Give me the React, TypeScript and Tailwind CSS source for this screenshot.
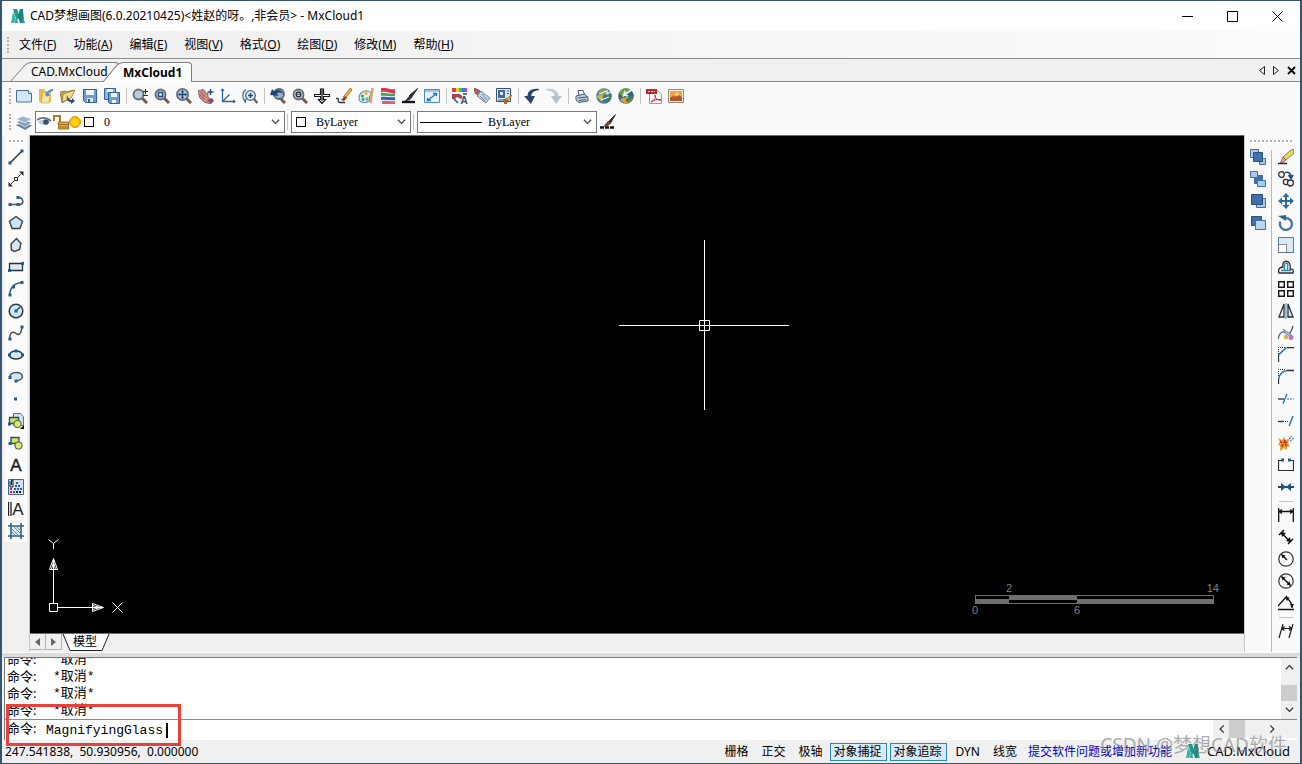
import type { ReactNode } from 'react';
import clsx from 'clsx';

type Tool = { label: string; icon: ReactNode };

const NAVY = '#1d4e7e';
const INK = '#2b2f36';

function Icon({ children }: { children: ReactNode }) {
  return (
    <svg viewBox="0 0 16 16" className="w-4 h-4 shrink-0" fill="none" aria-hidden="true">
      {children}
    </svg>
  );
}

function Lens({ children, r = 5 }: { children?: ReactNode; r?: number }) {
  return (
    <>
      <path d="M10 10l5 5" stroke="#7d5a48" strokeWidth="3" />
      <circle cx="6.5" cy="6.5" r={r} fill="#bccbd9" stroke="#646e79" strokeWidth="1.8" />
      {children}
    </>
  );
}

const fileTools: Tool[] = [
  {
    label: '新建',
    icon: (
      <>
        <path d="M.5 2.500h12l3 3v8.500H.5z" fill="#d3e7f8" stroke="#44719c" />
        <path d="M12.500 2.500v3h3" fill="#fff" stroke="#44719c" />
      </>
    ),
  },
  {
    label: '打开',
    icon: (
      <>
        <path d="M1 1h5l1 2h6v11H1z" fill="#e3bb50" />
        <path d="M5 4h8l-2 11H3z" fill="#f8e3a0" stroke="#cfa544" strokeWidth=".7" />
        <path d="M15 2c-3 0-5 2-6 5M8 4.500l.6 3 3-.7" stroke="#4f8fc4" strokeWidth="1.8" />
      </>
    ),
  },
  {
    label: '打开云图',
    icon: (
      <>
        <path d="M0 4l5-1 2 1 6-2-3 8-8 5z" fill="#cdab4b" stroke="#8b7433" strokeWidth=".8" />
        <path d="M3 6l12-4-4 8-9 4z" fill="#f0dc8c" stroke="#8b7433" strokeWidth=".8" />
        <path d="M7 7c1 4 3 5 5 5v-2l3 3-4 3v-2c-3 0-5-2-4-7z" fill="#2b4f74" />
      </>
    ),
  },
  {
    label: '保存',
    icon: (
      <>
        <path d="M1.500 1.500h13v13h-11l-2-2z" fill="#6f9fd0" stroke="#2f5f94" />
        <path d="M4 2h8v5H4z" fill="#eaf2fa" />
        <path d="M5 10h6v4H5z" fill="#dce6f0" />
        <path d="M6 11h2v3H6z" fill="#2f5f94" />
      </>
    ),
  },
  {
    label: '另存为',
    icon: (
      <>
        <path d="M.5.500h11v11H.5z" fill="#8fb5dd" stroke="#2f5f94" />
        <path d="M3 1h6v3H3z" fill="#eaf2fa" />
        <path d="M4.500 4.500h11v11h-10l-1-1z" fill="#6f9fd0" stroke="#2f5f94" />
        <path d="M7 5h6v4H7zM8 12h4v3H8z" fill="#eaf2fa" />
      </>
    ),
  },
];

const viewTools: Tool[] = [
  {
    label: '实时缩放',
    icon: (
      <>
        <Lens />
        <path d="M11 3.500h5M13.500 1v5M11 7.500h5" stroke={INK} strokeWidth="1.200" />
      </>
    ),
  },
  {
    label: '窗口缩放',
    icon: (
      <Lens>
        <path d="M4.500 4.500h4v4h-4z" fill="#fff" stroke={NAVY} strokeWidth="1.500" />
      </Lens>
    ),
  },
  {
    label: '范围缩放',
    icon: (
      <Lens r={5.6}>
        <path d="M6.500 2.500v8M2.500 6.500h8" stroke={NAVY} strokeWidth="1.600" />
        <path d="M5 4l1.500-2L8 4M5 9l1.500 2L8 9M4 5L2 6.500 4 8M9 5l2 1.500L9 8" fill={NAVY} />
      </Lens>
    ),
  },
  {
    label: '平移',
    icon: (
      <>
        <path d="M0 2l3 1 1-2 3 2 1 3 2-1v4l5 4-3 3-6-2-5-5 1-1-3-3z" fill="#c98b88" stroke="#8d4f4c" strokeWidth=".8" />
        <path d="M3 4l4 5M2 7l4 4" stroke="#8d4f4c" strokeWidth=".8" />
        <path d="M12.500 1v6M9.500 4h6" stroke={NAVY} strokeWidth="1.400" />
        <path d="M9 12l5-2 2 3-3 3z" fill="#7b5660" />
      </>
    ),
  },
  {
    label: '坐标系',
    icon: (
      <>
        <path d="M2.500 1v12.500H15M2.500 13.500l7-7" stroke="#2f6b9e" strokeWidth="1.300" />
        <path d="M.5 3l2-3 2 3M13 11.500l3 2-3 2" fill="#2f6b9e" />
      </>
    ),
  },
  {
    label: '上一视图',
    icon: (
      <>
        <path d="M12 11l3.500 4" stroke="#7d5a48" strokeWidth="2.200" />
        <circle cx="8.500" cy="7.500" r="4.800" fill="#e1edf6" stroke="#4c6378" strokeWidth="1.300" />
        <path d="M8.500 5v5M6 7.500h5" stroke={NAVY} strokeWidth="1.400" />
        <path d="M4 1.500C0 4 0 10 3 13.500M1.500 11l1.800 3 .7-3" stroke="#39698f" strokeWidth="1.200" />
      </>
    ),
  },
];

const drawTools: Tool[] = [
  {
    label: '视图返回',
    icon: (
      <>
        <path d="M10 10l5 5" stroke="#7d5a48" strokeWidth="3" />
        <circle cx="9" cy="6" r="5" fill="#9bb4cc" stroke="#55697c" strokeWidth="1.800" />
        <path d="M0 7l2-6 2 2c4-2 8-1 9 3-3-2-5-2-6 0l2 2z" fill="#1f4775" />
      </>
    ),
  },
  {
    label: '查找',
    icon: (
      <Lens>
        <circle cx="6.500" cy="6.500" r="2.200" fill="#fff" stroke={INK} strokeWidth="1.400" />
        <path d="M5.500 6.500h2" stroke={INK} />
      </Lens>
    ),
  },
  {
    label: '十字光标',
    icon: (
      <path
        d="M6.500.500v6h-6v2h6v3h-2L8 15.500l3.500-4h-2v-3h6v-2h-6v-6M8 0v13"
        fill="#fff"
        stroke="#17191d"
        strokeWidth="1.200"
      />
    ),
  },
  {
    label: '画笔',
    icon: (
      <>
        <path d="M15.500.500L8 10" stroke="#a8702a" strokeWidth="3.200" />
        <path d="M15 1L8 10" stroke="#f3c95c" strokeWidth="1.400" />
        <path d="M9 8l-4 4 3 1 3-3z" fill="#8f3e22" />
        <path d="M0 10.500c5-1 0 4 4 4h5" stroke={INK} strokeWidth="1.300" />
      </>
    ),
  },
  {
    label: '颜色',
    icon: (
      <>
        <path d="M1 10C1 5 6 2 10 3s4 4 2 5 1 3-1 5-10 3-10-3z" fill="#e9f1e2" stroke="#5f97bd" strokeWidth="1.200" />
        <circle cx="4.500" cy="8" r="1.500" fill="#3f9b58" />
        <circle cx="8" cy="5.500" r="1.400" fill="#e99a2c" />
        <circle cx="5" cy="11.500" r="1.400" fill="#3b83c8" />
        <circle cx="9" cy="11" r="1.700" fill="#65b3a7" />
        <path d="M14.500 0l-2 15" stroke="#e39a5e" strokeWidth="2.200" />
      </>
    ),
  },
  {
    label: '图层颜色',
    icon: (
      <>
        <path d="M1 0h5c4 1 6 2 9 1v4C11 6 7 3 1 4z" fill="#d73550" />
        <path d="M1 5c5-1 9 2 14 0v3C10 9 6 7 1 8z" fill="#3fa55a" />
        <path d="M1 9c5-1 9 1 14 0v3C10 13 6 11 1 12z" fill="#365fc2" />
        <path d="M2 13c5-1 8 1 13 0v3H2z" fill="#cf6478" />
      </>
    ),
  },
  {
    label: '线型',
    icon: (
      <>
        <path d="M15.500.500L7 8l2 2z" fill="#22262c" stroke="#22262c" />
        <path d="M8 7l-6 7 6-2 2-3z" fill="#33373e" />
        <path d="M0 14h13" stroke="#17191d" strokeWidth="2.400" />
      </>
    ),
  },
  {
    label: '全屏',
    icon: (
      <>
        <path d="M.5 1.500h15v13H.5z" fill="#e3f0fa" stroke="#4a8cbf" />
        <path d="M1 2h14v2H1z" fill="#9bc6e6" />
        <path d="M4 12l8-6M9 5.500h3.500V8M3.500 10v2.500H7" stroke="#2d78b4" strokeWidth="1.300" />
      </>
    ),
  },
];

const propertyTools: Tool[] = [
  {
    label: '文字样式',
    icon: (
      <>
        <path d="M0 0h4v4H0z" fill="#e53b3b" />
        <path d="M4 0h3v4H4z" fill="#e8d92f" />
        <path d="M7 0h3v4H7z" fill="#3cc84a" />
        <path d="M10 0h3v4h-3z" fill="#347be5" />
        <path d="M13 0h2v4h-2z" fill="#d433d0" />
        <path d="M0 6h8l3 3-2 2-4-2-2 2H0z" fill="#a04a50" />
        <path d="M2 11l4 4M11 6h4" stroke="#30506f" strokeWidth="1.500" />
        <text x="12" y="16" textAnchor="middle" fontSize="10" fontWeight="bold" fontFamily="Liberation Sans, sans-serif" fill="#30506f">A</text>
      </>
    ),
  },
  {
    label: '特性匹配',
    icon: (
      <>
        <path d="M0 0l5 2 4 4-3 3-5-4z" fill="#a8605c" stroke="#70403f" strokeWidth=".7" />
        <path d="M7 3l9 7-4 5-9-7z" fill="#c3d3e2" stroke="#55748f" strokeWidth=".8" />
        <path d="M8 6l5 6M6 8l5 5" stroke="#55748f" strokeWidth=".8" />
      </>
    ),
  },
  {
    label: '特性',
    icon: (
      <>
        <path d="M.5.500h14v13H.5z" fill="#dfeaf4" stroke="#37506e" />
        <path d="M2 2h7v8H2z" fill="#3a69a3" />
        <path d="M4 4h3v3H4z" fill="#dfeaf4" />
        <path d="M11 3h2M11 5.500h2M2 12h5" stroke="#37506e" />
        <path d="M16 7l-4 6-3-2z" fill="#eebd46" stroke="#95661c" strokeWidth=".7" />
        <path d="M7 11h5l-1 5H8z" fill="#a06c25" />
      </>
    ),
  },
];

const historyTools: Tool[] = [
  {
    label: '撤销',
    icon: (
      <>
        <path d="M15 1C8 0 3 3 3.500 9h4C7 5 9 3 15 2z" fill="#26466e" />
        <path d="M0 8h11l-4 8z" fill="#26466e" />
      </>
    ),
  },
  {
    label: '重做',
    icon: (
      <>
        <path d="M0 1c8-1 13 2 12.500 8h-4C9 5 6 3 0 2z" fill="#c3c9ce" />
        <path d="M16 8H5l5 8z" fill="#b9c0c6" />
      </>
    ),
  },
];

const outputTools: Tool[] = [
  {
    label: '打印',
    icon: (
      <>
        <path d="M4 2.500h5l2 5H5z" fill="#fff" stroke="#455a72" />
        <path d="M2 8l8-2 4 3v4l-9 1.500L2 12z" fill="#bfcbd9" stroke="#455a72" />
        <path d="M4 10l9-1M5 12.500l7-1" stroke="#455a72" />
      </>
    ),
  },
  {
    label: '云同步',
    icon: (
      <>
        <circle cx="8" cy="8" r="7.800" fill="#4479ac" />
        <path d="M1 5c3-6 10-5 13-1L8 7z" fill="#7fa544" />
        <path d="M9 15c5-1 7-6 6-9l-6 5z" fill="#3f7f52" />
        <path d="M0 8l7-2-1 8z" fill="#d9b73f" />
        <path d="M3 6l8-3v3l4-2M13 9l-8 3" stroke="#e9f0f4" strokeWidth="1.300" />
      </>
    ),
  },
  {
    label: '云浏览',
    icon: (
      <>
        <circle cx="8" cy="8" r="7.800" fill="#2f638e" />
        <path d="M1 5c3-6 10-5 12-2L5 10z" fill="#6aa345" />
        <path d="M2 11c3 6 10 6 13-1l-6-1z" fill="#d9a53a" />
        <path d="M7 12l7-5 1 3-5 5z" fill="#3f7f52" />
        <path d="M15 1L6 7l1-4M6 7l4 1" stroke="#f4f6f2" strokeWidth="1.800" />
      </>
    ),
  },
];

const exportTools: Tool[] = [
  {
    label: '输出PDF',
    icon: (
      <>
        <path d="M3.500 2.500h8l4 4v9h-12z" fill="#fff" stroke="#9c9c9c" />
        <path d="M0 1h11v5H0z" fill="#c9202b" />
        <path d="M2 3.500h7" stroke="#fff" strokeDasharray="2 1" />
        <path d="M5 14c4-2 5-5 4-7 0 4 3 5 6 5-4-1-7 0-10 2z" stroke="#c9202b" />
      </>
    ),
  },
  {
    label: '输出图片',
    icon: (
      <>
        <path d="M.5 1.500h15v13H.5z" fill="#f7f2ea" stroke="#8f8677" />
        <path d="M2 3h12v10H2z" fill="#eea24e" />
        <path d="M2 10c3-4 5 0 7-2s3 0 5 1v4H2z" fill="#b2542d" />
        <circle cx="9" cy="6" r="1.800" fill="#fbdc76" />
      </>
    ),
  },
];

const topGroups = [fileTools, viewTools, drawTools, propertyTools, historyTools, outputTools, exportTools];

function Node({ x, y }: { x: number; y: number }) {
  return <rect x={x - 1.5} y={y - 1.5} width="3" height="3" fill="#1c5f92" />;
}

const leftTools: Tool[] = [
  {
    label: '直线',
    icon: (
      <>
        <path d="M2 14L14 2" stroke={INK} strokeWidth="1.500" />
        <Node x={2} y={14} />
        <Node x={14} y={2} />
      </>
    ),
  },
  {
    label: '构造线',
    icon: (
      <>
        <path d="M1 15L15 1" stroke={INK} />
        <path d="M11 .5h4.500V5zM.5 11v4.500H5z" fill={INK} />
        <rect x="6.500" y="6.500" width="3" height="3" fill="#fff" stroke={INK} />
      </>
    ),
  },
  {
    label: '多段线',
    icon: (
      <>
        <path d="M1 11.500h10c5 0 5-6 0-7" stroke="#44535f" strokeWidth="1.600" />
        <Node x={2} y={11.5} />
        <Node x={10} y={11.5} />
        <Node x={10} y={4.5} />
      </>
    ),
  },
  {
    label: '正多边形',
    icon: <path d="M8 1.500l6.500 4.800-2.500 7.200H4L1.500 6.300z" fill="#cfe2f0" stroke="#2f4250" strokeWidth="1.400" />,
  },
  {
    label: '多边形',
    icon: <path d="M8.500 1.500L13 6.500l-1.500 6L6.500 14.500 3.500 13 3 7z" fill="#d8e6f0" stroke="#3f464d" strokeWidth="1.500" />,
  },
  {
    label: '矩形',
    icon: (
      <>
        <path d="M1.500 4.500h13v7h-13z" fill="#dceaf5" stroke={INK} strokeWidth="1.300" />
        <Node x={14.5} y={4.5} />
        <Node x={1.5} y={11.5} />
      </>
    ),
  },
  {
    label: '圆弧',
    icon: (
      <>
        <path d="M1.500 14.500C2 7 6 2 14 1.500" stroke="#4a555e" strokeWidth="1.600" />
        <Node x={2} y={14} />
        <Node x={5.5} y={6} />
        <Node x={14} y={1.5} />
      </>
    ),
  },
  {
    label: '圆',
    icon: (
      <>
        <circle cx="8" cy="8" r="6.800" fill="#d5e8f5" stroke="#2d3942" strokeWidth="1.500" />
        <path d="M8 8l4-4" stroke={NAVY} strokeWidth="1.500" />
        <Node x={8} y={8} />
      </>
    ),
  },
  {
    label: '样条曲线',
    icon: (
      <>
        <path d="M1.500 14C2 7 5 6 8 8.500S13 9 14 2" stroke="#4a4f55" strokeWidth="1.500" />
        <Node x={2} y={14} />
        <Node x={14} y={2} />
      </>
    ),
  },
  {
    label: '椭圆',
    icon: (
      <>
        <ellipse cx="8" cy="8" rx="6.500" ry="4" fill="#d5e8f5" stroke="#2d3942" strokeWidth="1.500" />
        <Node x={1.5} y={8} />
        <Node x={14.5} y={8} />
        <Node x={8} y={4} />
      </>
    ),
  },
  {
    label: '椭圆弧',
    icon: (
      <>
        <path d="M2 8C2 2 14 2 14.500 7.500 14 11 11 11.500 8 12" fill="#d5e8f5" stroke="#46525c" strokeWidth="1.500" />
        <Node x={2} y={8.5} />
        <Node x={8} y={12} />
      </>
    ),
  },
  { label: '点', icon: <Node x={7.5} y={8} /> },
  {
    label: '插入块',
    icon: (
      <>
        <path d="M5.500.500h7l3 3v9h-10z" fill="#cfe0f3" stroke="#4f7499" />
        <path d="M1.500 4.500h9v6h-9z" fill="#d9e25a" stroke={NAVY} strokeWidth="1.300" />
        <circle cx="9.500" cy="11" r="3.600" fill="#d9e87a" stroke="#5b7a45" strokeWidth="1.200" />
        <Node x={1.5} y={11} />
        <path d="M16 12v4h-4z" fill="#000" />
      </>
    ),
  },
  {
    label: '创建块',
    icon: (
      <>
        <path d="M3 2.500h8v6H3z" fill="#d9e25a" stroke={NAVY} strokeWidth="1.300" />
        <circle cx="10.500" cy="10.500" r="3.500" fill="#d9e87a" stroke="#5b6a45" strokeWidth="1.200" />
        <Node x={2} y={8.5} />
      </>
    ),
  },
  {
    label: '单行文字',
    icon: <text x="8" y="14" textAnchor="middle" fontSize="17" fontFamily="Liberation Sans, sans-serif" fill="#1a1a1a" stroke="#1a1a1a" strokeWidth=".4">A</text>,
  },
  {
    label: '图案填充',
    icon: (
      <>
        <path d="M.5.500h15v15H.5z" fill="#d3e2f5" stroke="#3e669a" />
        <path d="M2 2v6h3V1H3.500v5" stroke="#222" />
        <path d="M8 4h2M7 7h2m1 0h2M6 10h2m1 0h2m1 0h2" stroke="#255f9c" strokeWidth="1.800" />
        <path d="M2 10h2M2 13h2m1 0h2" stroke="#c22" strokeWidth="1.800" />
        <path d="M8 13h2m1 0h2" stroke="#222" strokeWidth="1.800" />
      </>
    ),
  },
  {
    label: '多行文字',
    icon: (
      <>
        <path d="M.5 1v14M3 1v14" stroke="#222" strokeWidth="1.300" />
        <text x="10" y="14" textAnchor="middle" fontSize="17" fontFamily="Liberation Sans, sans-serif" fill="#1a1a1a">A</text>
      </>
    ),
  },
  {
    label: '面域',
    icon: (
      <>
        <path d="M3 3h10v10H3z" fill="#d8e8f3" />
        <path d="M3 0v16M13 0v16M0 3h16M0 13h16" stroke="#33617f" strokeWidth="1.600" />
        <path d="M4 6l6 6M6 4l7 7M4 9l3 3M9 4l4 4" stroke="#6a91ac" />
      </>
    ),
  },
];

const BACK = '#a8cbea';
const FRONT = '#416fa8';

const orderTools: Tool[] = [
  {
    label: '前置',
    icon: (
      <>
        <path d="M.5.500h8v8h-8zM9.500 9.500h6v6h-6z" fill={BACK} stroke={FRONT} />
        <path d="M3.500 3.500h9v9h-9z" fill={FRONT} stroke="#2b4f7e" />
      </>
    ),
  },
  {
    label: '后置',
    icon: (
      <>
        <path d="M4 4h9v9H4z" fill={FRONT} />
        <path d="M.5.500h7v6h-7zM7.500 9.500h8v6h-8z" fill={BACK} stroke={FRONT} />
      </>
    ),
  },
  {
    label: '置于对象之上',
    icon: (
      <>
        <path d="M6.500 5.500h9v9h-9z" fill={BACK} stroke={FRONT} />
        <path d="M1.500 1.500h11v10h-11z" fill={FRONT} stroke="#2b4f7e" />
      </>
    ),
  },
  {
    label: '置于对象之下',
    icon: (
      <>
        <path d="M1.500 1.500h10v9h-10z" fill={FRONT} stroke="#2b4f7e" />
        <path d="M5.500 5.500h10v9h-10z" fill="#b9d5ee" stroke={FRONT} />
      </>
    ),
  },
];

const modifyTools: Tool[] = [
  {
    label: '删除',
    icon: (
      <>
        <path d="M13 1l3-1v4l-8 7-3-3z" fill="#e6d95e" stroke="#6f6230" strokeWidth=".8" />
        <path d="M5 8l3 3-3 2.500H2.500z" fill="#e5a29c" stroke="#7f3d3c" strokeWidth=".7" />
        <path d="M0 14.500h9" stroke={INK} strokeWidth="1.500" />
      </>
    ),
  },
  {
    label: '复制',
    icon: (
      <>
        <circle cx="3.500" cy="3.500" r="2.800" stroke={INK} strokeWidth="1.300" />
        <circle cx="8" cy="11" r="2.600" stroke={INK} strokeWidth="1.300" />
        <circle cx="12.500" cy="12" r="3" fill="#fff" stroke={INK} strokeWidth="1.300" />
        <path d="M7 1.500c4-1 6 1 6 5M10.500 4l2.500 3.500L15 4" stroke={NAVY} strokeWidth="1.600" />
      </>
    ),
  },
  {
    label: '移动',
    icon: (
      <>
        <path d="M8 2v12M2 8h12" stroke="#2f679b" strokeWidth="2" />
        <path d="M4.500 4L8 0l3.500 4zM4.500 12L8 16l3.500-4zM4 4.500L0 8l4 3.500zM12 4.500L16 8l-4 3.500z" fill="#2f679b" />
      </>
    ),
  },
  {
    label: '旋转',
    icon: (
      <>
        <path d="M8 3a6 6 0 1 1-5.500 3.500" stroke="#48789f" strokeWidth="2.400" />
        <path d="M0 1l8-1v6z" fill="#326591" />
      </>
    ),
  },
  {
    label: '缩放',
    icon: (
      <>
        <path d="M.5.500h15v15H.5z" fill="#dbe9f6" stroke="#4d7dab" />
        <path d="M.5 7.500h8v8h-8z" fill="#fff" stroke={INK} strokeDasharray="1 1" />
      </>
    ),
  },
  {
    label: '偏移',
    icon: (
      <>
        <path d="M1 14h14c1-4-1-4-3-4 2-10-9-10-7-2-4 0-5 3-4 6z" stroke={INK} strokeWidth="1.300" />
        <path d="M3 11.500h10M6.500 11V8c-1-5 5-5 3 0v3" stroke="#3485b5" strokeWidth="1.400" />
      </>
    ),
  },
  {
    label: '阵列',
    icon: <path d="M.7.700h5.600v5.600H.7zM9.700.700h5.600v5.600H9.700zM.7 9.700h5.600v5.600H.7zM9.700 9.700h5.600v5.600H9.700z" stroke="#15181c" strokeWidth="1.400" />,
  },
  {
    label: '镜像',
    icon: (
      <>
        <path d="M6 1v13H1z" stroke={INK} strokeWidth="1.300" />
        <path d="M10 1v13h5z" fill="#dde7ef" stroke={INK} strokeWidth="1.300" />
        <path d="M8 0v16" stroke="#3485b5" />
      </>
    ),
  },
  {
    label: '编辑样条',
    icon: (
      <>
        <path d="M0 14C2 6 5 6 8 8s5 0 7-7" stroke="#44607c" strokeWidth="1.300" />
        <path d="M5 4l8 5 1 3-6-3z" fill="#a4bad3" stroke="#5f7892" strokeWidth=".6" />
        <circle cx="8" cy="12" r="2.200" fill="#ddb338" />
        <circle cx="13" cy="12.500" r="2.500" fill="#b279cf" />
      </>
    ),
  },
  {
    label: '倒角',
    icon: (
      <>
        <path d="M.5 15V8M9 .500h7" stroke={INK} strokeWidth="1.300" />
        <path d="M.5 8l8-7.500" stroke="#2a78b8" strokeWidth="1.600" />
        <path d="M.5 7V.500H8" stroke={INK} strokeDasharray="1 1" />
      </>
    ),
  },
  {
    label: '圆角',
    icon: (
      <>
        <path d="M.5 15v-5M9 1.500h7" stroke={INK} strokeWidth="1.300" />
        <path d="M.5 10c1-5 4-8 9-8.500" stroke="#2a78b8" strokeWidth="1.600" />
        <path d="M.5 7V.500H8" stroke={INK} strokeDasharray="1 1" />
      </>
    ),
  },
  {
    label: '修剪',
    icon: (
      <>
        <path d="M0 8h6" stroke={INK} strokeWidth="1.300" />
        <path d="M5 12.500L9 3" stroke="#2a78b8" strokeWidth="1.400" />
        <path d="M9 8h7" stroke="#2a78b8" strokeDasharray="2 1" />
      </>
    ),
  },
  {
    label: '延伸',
    icon: (
      <>
        <path d="M0 8.500h6" stroke={INK} strokeWidth="1.300" />
        <path d="M7 8.500h4" stroke={INK} strokeDasharray="1 1" />
        <path d="M11 13L15 3" stroke="#2a78b8" strokeWidth="1.500" />
      </>
    ),
  },
  {
    label: '分解',
    icon: (
      <>
        <path d="M9 6l5-5M12 6l4-3" stroke="#5b83b3" strokeWidth="1.500" strokeDasharray="2 1" />
        <path d="M0 3l4 2 2-3 2 3 3-1-1 4 2 3-3 1v3l-3-2-4 3v-5L0 9l2-2z" fill="#e9a22d" />
        <path d="M2 6l2 2M7 5l-1 3M4 12l1-3M9 11l-2-2M9 7l-2 1" stroke="#c23022" strokeWidth="1.600" />
      </>
    ),
  },
  {
    label: '打断',
    icon: (
      <>
        <path d="M4 3.500H.500v10h15v-10H12" stroke={INK} strokeWidth="1.200" />
        <Node x={4.5} y={3} />
        <Node x={11.5} y={3} />
      </>
    ),
  },
  {
    label: '合并',
    icon: (
      <>
        <path d="M0 8h16" stroke="#16304a" strokeWidth="1.800" />
        <path d="M3 4L8 8l-5 4zM13 4L8 8l5 4z" fill="#235483" />
      </>
    ),
  },
];

const dimensionTools: Tool[] = [
  {
    label: '线性标注',
    icon: <path d="M.7 1v14M15.300 1v14M1 4.500h14M4 2.500l-3 2 3 2M12 2.500l3 2-3 2" stroke="#111" strokeWidth="1.300" />,
  },
  {
    label: '对齐标注',
    icon: (
      <>
        <path d="M1 6l5-5M10 15l5-5M3.500 4l9 9" stroke="#111" strokeWidth="1.500" />
        <path d="M3 3l5 1-4 4zM13 13l-5-1 4-4z" fill="#111" />
      </>
    ),
  },
  {
    label: '半径标注',
    icon: (
      <>
        <circle cx="8" cy="8" r="7.200" stroke="#333" strokeWidth="1.200" />
        <path d="M9 9L4 4" stroke="#111" strokeWidth="1.500" />
        <path d="M3 3l4.500 1.500L4.500 7.500z" fill="#111" />
      </>
    ),
  },
  {
    label: '直径标注',
    icon: (
      <>
        <circle cx="8" cy="8" r="7.200" stroke="#333" strokeWidth="1.200" />
        <path d="M12 12L4 4" stroke="#111" strokeWidth="1.500" />
        <path d="M3 3l4.500 1.500L4.500 7.500zM13 13l-4.500-1.500 3-3z" fill="#111" />
      </>
    ),
  },
  {
    label: '角度标注',
    icon: (
      <>
        <path d="M0 14.500h16M0 11L9 1M8 3c4 2 6 5 6 10" stroke="#111" strokeWidth="1.300" />
        <path d="M7 2l4.500.5L9 6zM12 9h4l-2 4z" fill="#111" />
      </>
    ),
  },
];

const obliqueTool: Tool = {
  label: '倾斜标注',
  icon: <path d="M1 15L5 1M11 15l4-14M4 5.500h9M6.500 3.500L4 5.500l2.500 2M11 3.500l2.500 2-2.500 2" stroke="#222" strokeWidth="1.200" />,
};

const menus = [
  ['文件', 'F'],
  ['功能', 'A'],
  ['编辑', 'E'],
  ['视图', 'V'],
  ['格式', 'O'],
  ['绘图', 'D'],
  ['修改', 'M'],
  ['帮助', 'H'],
];

const modes = [
  { label: '栅格', on: false },
  { label: '正交', on: false },
  { label: '极轴', on: false },
  { label: '对象捕捉', on: true },
  { label: '对象追踪', on: true },
  { label: 'DYN', on: false },
  { label: '线宽', on: false },
];

function ToolButton({ tool }: { tool: Tool }) {
  return (
    <button
      type="button"
      aria-label={tool.label}
      title={tool.label}
      className="flex w-[22px] h-[22px] shrink-0 items-center justify-center hover:bg-sky-100"
    >
      <Icon>{tool.icon}</Icon>
    </button>
  );
}

function Grip({ vertical = false }: { vertical?: boolean }) {
  return (
    <div
      className={clsx(
        'border-[#b5b5b5] shrink-0',
        vertical ? 'h-4 w-0 border-l-2 border-dotted' : 'h-0 w-full border-t-2 border-dotted'
      )}
    />
  );
}

function Logo() {
  return (
    <svg viewBox="0 0 16 16" className="w-4 h-4 shrink-0" aria-hidden="true">
      <path d="M3 1h4l3 8-3 3-2-4z" fill="#1d9c8d" />
      <path d="M3 4l3 7-2 4H1z" fill="#35b7a4" />
      <path d="M10 1h3l1 14h-4L8 8z" fill="#15877c" />
      <path d="M13 8l2 7h-3zM5 13l2-3 1 5H5z" fill="#2aa99a" />
    </svg>
  );
}

function Chevron({ className }: { className?: string }) {
  return (
    <svg viewBox="0 0 10 6" className={clsx('w-[9px] h-[6px]', className)} fill="none" aria-hidden="true">
      <path d="M1 .5l4 4 4-4" stroke="currentColor" strokeWidth="1.4" />
    </svg>
  );
}

function Combo({ label, value, className, children }: { label: string; value: string; className: string; children: ReactNode }) {
  return (
    <div className={clsx('relative flex h-[22px] items-center border border-[#7a7a7a] bg-white', className)}>
      {children}
      <select
        aria-label={label}
        defaultValue={value}
        className="h-full min-w-0 flex-1 appearance-none bg-transparent text-xs text-black outline-none font-['Liberation_Serif','Noto_Sans_CJK_SC',serif]"
      >
        <option>{value}</option>
      </select>
      <Chevron className="absolute right-1 text-[#444] pointer-events-none" />
    </div>
  );
}

function Swatch() {
  return <span className="w-[10px] h-[10px] shrink-0 border border-black bg-white" />;
}

function TitleBar() {
  return (
    <header className="flex h-[30px] items-center bg-white pl-2">
      <Logo />
      <h1 className="flex-1 pl-1 text-xs">CAD梦想画图(6.0.20210425)&lt;姓赵的呀。,非会员&gt; - MxCloud1</h1>
      <div className="flex">
        <button type="button" aria-label="最小化" className="flex h-7 w-[45px] items-center justify-center">
          <svg viewBox="0 0 11 11" className="w-[11px] h-[11px]"><path d="M0 5.500h11" stroke="#000" /></svg>
        </button>
        <button type="button" aria-label="最大化" className="flex h-7 w-[45px] items-center justify-center">
          <svg viewBox="0 0 11 11" className="w-[11px] h-[11px]" fill="none"><path d="M.5.500h10v10H.5z" stroke="#000" /></svg>
        </button>
        <button type="button" aria-label="关闭" className="flex h-7 w-[45px] items-center justify-center">
          <svg viewBox="0 0 11 11" className="w-[11px] h-[11px]"><path d="M.5.500l10 10M10.500.5l-10 10" stroke="#000" /></svg>
        </button>
      </div>
    </header>
  );
}

function MenuBar() {
  return (
    <nav className="flex h-[27px] items-center bg-gradient-to-r from-[#efefef] to-[#fbfbfb] pl-[5px]">
      <Grip vertical />
      <div className="flex gap-[17px] pl-[10px]">
        {menus.map(([name, key]) => (
          <button type="button" key={key} className="text-xs">
            {name}(<span className="underline">{key}</span>)
          </button>
        ))}
      </div>
    </nav>
  );
}

function DocTab({ name, active = false }: { name: string; active?: boolean }) {
  return (
    <button
      type="button"
      role="tab"
      aria-selected={active}
      className={clsx('relative flex text-xs', active ? '-mb-px -ml-4 h-5 font-bold' : 'h-[19px]')}
    >
      <svg viewBox="0 0 20 19" preserveAspectRatio="none" className="h-full w-5" fill="none">
        <path d="M0 19L14 3q3-2.500 6-2.500V19z" fill={active ? '#fff' : '#f3f3f3'} />
        <path d="M0 19L14 3q3-2.500 6-2.500" stroke="#7d7d7d" />
      </svg>
      <span
        className={clsx(
          'flex h-full items-center border-t border-r border-[#7d7d7d] rounded-tr-sm',
          active ? 'w-[69px] bg-white' : 'w-[88px] bg-[#f3f3f3]'
        )}
      >
        {name}
      </span>
    </button>
  );
}

function DocTabs() {
  return (
    <div className="flex h-6 items-end border-y border-[#8a8a8a] bg-[#f0f0f0] pl-[9px] pr-1">
      <div role="tablist" className="flex flex-1 items-end">
        <DocTab name="CAD.MxCloud" />
        <DocTab name="MxCloud1" active />
      </div>
      <div className="flex h-full items-center gap-2">
        <button type="button" aria-label="上一个">
          <svg viewBox="0 0 6 9" className="w-[6px] h-[9px]" fill="none"><path d="M5.500.500v8l-5-4z" stroke="#222" /></svg>
        </button>
        <button type="button" aria-label="下一个">
          <svg viewBox="0 0 6 9" className="w-[6px] h-[9px]" fill="none"><path d="M.5.500v8l5-4z" stroke="#222" /></svg>
        </button>
        <button type="button" aria-label="关闭图纸">
          <svg viewBox="0 0 9 9" className="w-[9px] h-[9px]"><path d="M1 1l7 7M8 1L1 8" stroke="#000" strokeWidth="1.800" /></svg>
        </button>
      </div>
    </div>
  );
}

function TopToolbars() {
  return (
    <div className="bg-[#fafafa]">
      <div className="flex h-[27px] items-center pl-[7px]">
        <Grip vertical />
        <div className="flex pl-[2px]">
          {topGroups.map((group, i) => (
            <div key={i} className="flex items-center">
              {i > 0 && (
                <span className="flex w-[6px] justify-center">
                  <span className="h-4 w-px bg-[#c4c4c4]" />
                </span>
              )}
              {group.map((tool) => (
                <ToolButton key={tool.label} tool={tool} />
              ))}
            </div>
          ))}
        </div>
      </div>

      <div className="flex h-[26px] items-center pl-[7px]">
        <Grip vertical />
        <div className="flex items-center pl-[2px]">
          <ToolButton
            tool={{
              label: '图层',
              icon: (
                <>
                  <path d="M0 11l7-2.500 9 3L9 16z" fill="#6884a0" />
                  <path d="M0 8l7-2.500 9 3L9 13z" fill="#819dba" stroke="#fff" strokeWidth=".7" />
                  <path d="M0 5l7-3 9 3-7 4z" fill="#9bb5cf" stroke="#fff" strokeWidth=".7" />
                </>
              ),
            }}
          />
          <Combo label="当前图层" value="0" className="w-[250px] pl-px">
            <Icon>
              <path d="M1 8c3-3 8-3 12 0-3 4-9 4-12 0z" fill="#b9cad8" />
              <circle cx="9" cy="8" r="2.800" fill="#34536d" />
              <path d="M0 6c4-3 10-3 14 1" stroke="#5c6f80" strokeWidth="1.800" />
            </Icon>
            <Icon>
              <path d="M1 7V2h6v6" stroke="#ab7f26" strokeWidth="2" />
              <path d="M5.500 8h10v7h-10z" fill="#e2b04a" stroke="#9a6c1a" />
              <path d="M6 10.500h9M6 13h9" stroke="#9a6c1a" />
            </Icon>
            <svg viewBox="0 0 12 12" className="w-3 h-3">
              <path d="M4 0h4l4 4v4l-4 4H4L0 8V4z" fill="#f0a614" />
              <circle cx="6" cy="6" r="4" fill="#ffd013" />
            </svg>
            <span className="flex w-[23px] pl-[3px]"><Swatch /></span>
          </Combo>
          <span className="mx-[2px] h-4 w-px bg-[#c4c4c4]" />
          <Combo label="颜色" value="ByLayer" className="ml-px w-[120px] pl-1">
            <span className="flex w-5"><Swatch /></span>
          </Combo>
          <span className="mx-[2px] h-4 w-px bg-[#c4c4c4]" />
          <Combo label="线型" value="ByLayer" className="ml-px w-[180px] pl-[2px]">
            <span className="mr-[6px] h-px w-[62px] bg-black" />
          </Combo>
          <ToolButton
            tool={{
              label: '线宽',
              icon: (
                <>
                  <path d="M15.500.500L8 8l2 2z" fill="#333" stroke="#333" />
                  <path d="M8 7l-5 6 5-1 3-3z" fill="#6b4a2c" />
                  <path d="M0 13.500h15" stroke="#111" strokeWidth="2.400" strokeDasharray="4 1" />
                </>
              ),
            }}
          />
        </div>
      </div>
    </div>
  );
}

function Canvas() {
  return (
    <div className="relative flex-1 border-t border-[#6d6d6d] bg-black">
      <svg viewBox="0 0 170 170" className="absolute left-[589px] top-[104px] w-[170px] h-[170px]" fill="none" stroke="#fff">
        <path d="M0 85.500h170M85.500 0v170M80.500 80.500h10v10h-10z" />
      </svg>

      {/* UCS icon */}
      <svg viewBox="0 0 80 76" className="absolute left-4 bottom-5 w-20 h-[76px]" fill="none" stroke="#fff">
        <path d="M3.500 66.500h8v8h-8zM7.500 66V22M12 70.500h45" />
        <path d="M3.500 32.500l4-11 4 11zM5.500 32.500l2-8 2 8M46.500 66.500l11 4-11 4zM46.500 68.500l8 2-8 2" />
        <path d="M2.500 2.500l5 4 5-4M7.500 6.500V12" />
        <path d="M66.500 65.500l10 10M76.500 65.500l-10 10" />
      </svg>

      {/* Scale bar */}
      <div className="absolute right-[23px] bottom-4 w-[250px] text-[11px] leading-[13px] text-[#808080] font-['Liberation_Sans',sans-serif]">
        <div className="flex justify-between pl-[35px] pr-[2px]">
          <span>2</span>
          <span>14</span>
        </div>
        <div className="ml-1 mr-[7px] flex h-[9px] border border-[#6e6e6e]">
          <span className="mt-auto h-1 w-[33px] bg-[#6e6e6e]" />
          <span className="h-1 w-[68px] bg-[#6e6e6e]" />
          <span className="mt-auto h-1 flex-1 bg-[#6e6e6e]" />
        </div>
        <div className="flex pl-px">
          <span className="w-[102px]">0</span>
          <span>6</span>
        </div>
      </div>
    </div>
  );
}

function ModelTabs() {
  return (
    <div className="flex h-[19px] items-start border-t border-[#6d6d6d] bg-[#f0f0f0]">
      <button type="button" aria-label="上一布局" className="flex h-4 w-4 items-center justify-center border-r border-b border-[#b4b4b4]">
        <svg viewBox="0 0 5 8" className="w-[5px] h-2"><path d="M5 0v8L0 4z" fill="#666" /></svg>
      </button>
      <button type="button" aria-label="下一布局" className="flex h-4 w-4 items-center justify-center border-r border-b border-[#b4b4b4]">
        <svg viewBox="0 0 5 8" className="w-[5px] h-2"><path d="M0 0v8l5-4z" fill="#666" /></svg>
      </button>
      <button type="button" className="flex h-[17px] items-center text-xs">
        <svg viewBox="0 0 11 17" className="w-[11px] h-[17px]" fill="none"><path d="M1 0l7 16.500h3V0z" fill="#fff" /><path d="M1 0l7 16.500h3" stroke="#222" /></svg>
        <span className="flex h-full items-center border-b border-[#222] bg-white">模型</span>
        <svg viewBox="0 0 13 17" className="w-[13px] h-[17px]" fill="none"><path d="M0 0h12L5 16.500H0z" fill="#fff" /><path d="M12 0L5 16.500H0" stroke="#222" /></svg>
      </button>
    </div>
  );
}

function Workspace() {
  return (
    <main className="flex flex-1">
      <aside className="flex w-7 shrink-0 justify-center border-r border-[#c8c8c8] bg-[#f0f0f0]">
        <div className="flex flex-col self-start bg-[#fbfbfb]">
          <div className="flex h-[11px] items-center px-1"><Grip /></div>
          {leftTools.map((tool) => (
            <ToolButton key={tool.label} tool={tool} />
          ))}
        </div>
      </aside>

      <div className="flex min-w-0 flex-1 flex-col">
        <Canvas />
        <ModelTabs />
      </div>

      <aside className="flex w-14 shrink-0 flex-col border-l border-[#c8c8c8] bg-[#fafafa]">
        <div className="flex h-[11px] items-center pl-[5px] pr-2"><Grip /></div>
        <div className="flex flex-1 pl-[2px]">
          <div className="flex flex-col">
            {orderTools.map((tool) => (
              <ToolButton key={tool.label} tool={tool} />
            ))}
          </div>
          <span className="ml-[2px] mr-[3px] mt-1 w-px bg-[#b8b8b8]" />
          <div className="flex flex-col">
            {modifyTools.map((tool) => (
              <ToolButton key={tool.label} tool={tool} />
            ))}
            <span className="flex h-[6px] items-center px-1"><span className="h-px w-full bg-[#c4c4c4]" /></span>
            {dimensionTools.map((tool) => (
              <ToolButton key={tool.label} tool={tool} />
            ))}
            <span className="flex h-[6px] items-center px-1"><span className="h-px w-full bg-[#c4c4c4]" /></span>
            <ToolButton tool={obliqueTool} />
          </div>
        </div>
      </aside>
    </main>
  );
}

function CommandPanel() {
  return (
    <section className="relative z-10 ml-[2px] mr-[3px] border-t border-l border-[#7a7a7a] bg-white text-[13px] leading-[17px]">
      <div className="flex h-[61px] border-b border-[#8a8a8a] box-content">
        <div className="flex flex-1 flex-col justify-end overflow-hidden pl-[2px]">
          {[0, 1, 2, 3].map((n) => (
            <p key={n} className="flex shrink-0">
              <span className="w-[46px]">命令:</span>
              <span className="font-['Liberation_Mono','Noto_Sans_CJK_SC',monospace]">*取消*</span>
            </p>
          ))}
        </div>
        <div className="flex w-4 flex-col items-center bg-[#f0f0f0]">
          <button type="button" aria-label="向上滚动" className="flex h-[18px] items-center">
            <Chevron className="rotate-180 text-[#333]" />
          </button>
          <span className="mt-[9px] h-[17px] w-full bg-[#cdcdcd]" />
          <button type="button" aria-label="向下滚动" className="flex h-[18px] items-center">
            <Chevron className="text-[#333]" />
          </button>
        </div>
      </div>

      <div className="flex h-5">
        <label htmlFor="command" className="w-[41px] pl-[2px]">命令:</label>
        <div className="flex min-w-0 flex-1 items-center">
          <input
            id="command"
            defaultValue="MagnifyingGlass"
            spellCheck={false}
            className="h-[18px] w-[120px] outline-none font-['Liberation_Mono',monospace]"
          />
          <span className="h-[15px] w-[2px] bg-black" />
        </div>
        <div className="flex h-[18px] w-[68px] items-center bg-[#f0f0f0]">
          <button type="button" aria-label="向左滚动" className="flex w-4 justify-center">
            <Chevron className="rotate-90 text-[#333]" />
          </button>
          <span className="h-full w-4 bg-[#cdcdcd]" />
          <button type="button" aria-label="向右滚动" className="ml-auto flex w-[18px] justify-center">
            <Chevron className="-rotate-90 text-[#333]" />
          </button>
        </div>
        <span className="h-[18px] w-4 bg-[#f0f0f0]" />
      </div>

      <div className="absolute left-px top-[46px] h-[42px] w-[175px] border-3 border-[#e8403c] pointer-events-none" />
    </section>
  );
}

function StatusBar() {
  return (
    <footer className="relative z-20 flex h-[23px] items-center pl-[3px] pr-[11px] text-xs whitespace-nowrap">
      <span className="flex-1 whitespace-pre">247.541838,  50.930956,  0.000000</span>
      <div className="flex items-center gap-[3px]">
        {modes.map((mode) => (
          <button
            type="button"
            key={mode.label}
            aria-pressed={mode.on}
            className={clsx(
              'flex h-[18px] items-center border',
              mode.on ? 'w-[57px] pl-[2px] border-[#2e86c1] bg-[#d8ebf8]' : 'min-w-[33px] px-1 border-transparent'
            )}
          >
            {mode.label}
          </button>
        ))}
      </div>
      <a href="#feedback" className="ml-[6px] w-[144px] text-[#0000c8]">提交软件问题或增加新功能</a>
      <span className="ml-[13px] flex items-center gap-[6px]">
        <Logo />
        <span className="w-[82px] text-[13px]">CAD.MxCloud</span>
      </span>
      <span className="absolute right-[13px] bottom-[6px] text-[19px] leading-6 text-[#8a8a8a]/70 pointer-events-none">CSDN @梦想CAD软件</span>
    </footer>
  );
}

export default function App() {
  return (
    <div className="flex min-h-screen flex-col overflow-hidden border-y border-x-2 border-[#34546f] bg-[#f0f0f0] text-black font-['Noto_Sans','Noto_Sans_CJK_SC',sans-serif]">
      <TitleBar />
      <MenuBar />
      <DocTabs />
      <TopToolbars />
      <Workspace />
      <div className="h-[5px] border-t border-[#fafafa] bg-[#dcdcdc]" />
      <CommandPanel />
      <StatusBar />
    </div>
  );
}
